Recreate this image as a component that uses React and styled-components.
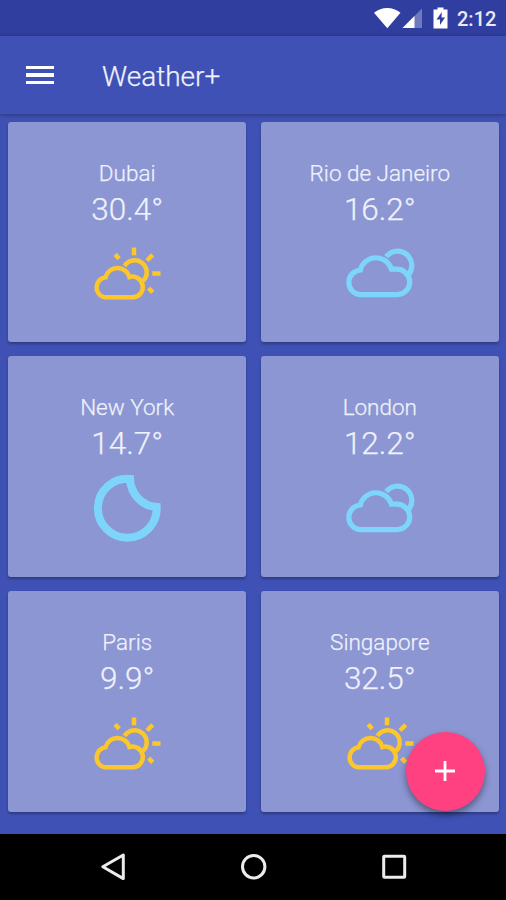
import React from "react";
import styled, { createGlobalStyle } from "styled-components";

const GlobalStyle = createGlobalStyle`
  * {
    box-sizing: border-box;
  }

  body {
    margin: 0;
    background-color: #3f51b5;
    font-family: Roboto, "Liberation Sans", sans-serif;
  }
`;

const Screen = styled.div`
  position: relative;
  display: flex;
  flex-direction: column;
  width: 506px;
  height: 900px;
  overflow: hidden;
  background-color: #3f51b5;
`;

const StatusBar = styled.div`
  display: flex;
  align-items: center;
  justify-content: flex-end;
  height: 36px;
  padding-right: 10px;
  background-color: #303f9f;
`;

const StatusIcons = styled.svg`
  display: block;
  width: 76px;
  height: 36px;
`;

const Clock = styled.div`
  width: 39px;
  margin-left: 7px;
  padding-top: 2px;
  color: #e8eafa;
  font-size: 20px;
  font-weight: 500;
  line-height: 36px;
  white-space: nowrap;
`;

const AppBar = styled.header`
  display: flex;
  align-items: center;
  height: 78px;
  padding: 0 26px;
  background-color: #3f51b5;
  box-shadow: 0 1px 5px rgba(0, 0, 0, 0.35);
`;

const MenuButton = styled.button`
  display: flex;
  flex-direction: column;
  gap: 4px;
  width: 28px;
  padding: 0;
  border: none;
  background: none;
`;

const MenuLine = styled.span`
  height: 3.6px;
  background-color: white;
`;

const Title = styled.h1`
  margin: 0 0 0 48px;
  padding-top: 3px;
  color: #f0f2fc;
  font-size: 28px;
  font-weight: 300;
  line-height: 40px;
  -webkit-text-stroke: 0.25px #f0f2fc;
`;

const Grid = styled.main`
  display: grid;
  flex: 1;
  grid-template-columns: 1fr 1fr;
  grid-auto-rows: 220.5px;
  gap: 14.3px;
  padding: 7.6px 7px 0 8px;
`;

const Card = styled.section`
  display: flex;
  flex-direction: column;
  align-items: center;
  padding-top: 37px;
  border-radius: 3px;
  background-color: #8c96d2;
  box-shadow: 0 2px 3px rgba(0, 0, 0, 0.28);
  color: #eff1fc;
  -webkit-text-stroke: 0.25px #eff1fc;
`;

const City = styled.div`
  font-size: 22.5px;
  font-weight: 300;
  line-height: 28px;
`;

const Temperature = styled.div`
  padding-top: 1px;
  font-size: 31.5px;
  font-weight: 300;
  line-height: 44px;
`;

const WeatherIcon = styled.svg`
  width: 100px;
  height: 76px;
  margin-top: 3.5px;
  fill: none;
  stroke: ${(props) => props.$color};
  stroke-width: ${(props) => props.$stroke};
`;

const AddButton = styled.button`
  position: absolute;
  right: 21.5px;
  bottom: 89.5px;
  display: flex;
  align-items: center;
  justify-content: center;
  width: 79px;
  height: 79px;
  padding: 0;
  border: none;
  border-radius: 50%;
  background-color: #ff4081;
  box-shadow: 0 4px 7px rgba(0, 0, 0, 0.4);
`;

const NavBar = styled.nav`
  height: 66px;
  background-color: black;
`;

const NavIcons = styled.svg`
  display: block;
  width: 506px;
  height: 66px;
  fill: none;
  stroke: #ececec;
  stroke-width: 3;
  stroke-linejoin: round;
`;

const PartlySunny = () => (
  <WeatherIcon viewBox="0 -5 100 76" $color="#fcc72c" $stroke={4.5}>
    <path d="M27.6 57.3A10.2 10.2 0 0 1 28.6 37.2A12.3 12.3 0 0 1 52.4 37A10.4 10.4 0 1 1 56.5 57.3Z" />
    <path d="M47.5 26A12 12 0 1 1 66 41" />
    <path d="M57 7.4V15.2M70 20.5L75.7 14.8M75.3 33.6H83.5M71.6 48.2L75.8 52.4M38.1 14.4L42.2 18.7" />
  </WeatherIcon>
);

const Cloudy = () => (
  <WeatherIcon viewBox="0 -5 100 76" $color="#7dd5fb" $stroke={5.2}>
    <path d="M30 54.7A12.4 12.4 0 0 1 30.3 30A16.2 16.2 0 0 1 61.5 29.2H66.7A12.7 12.7 0 0 1 67.2 54.7Z" />
    <path d="M56.2 16.7A13.7 13.7 0 1 1 78.8 34.2" />
  </WeatherIcon>
);

const ClearNight = () => (
  <WeatherIcon viewBox="0 -5 100 76" $color="#7dd5fb" $stroke={8}>
    <path d="M53 4C53.5 17.6 64 31.1 79.7 32.1A29.4 29.4 0 1 1 53 4Z" />
  </WeatherIcon>
);

const ICONS = {
  sunny: PartlySunny,
  cloudy: Cloudy,
  night: ClearNight,
};

const CITIES = [
  { name: "Dubai", temp: "30.4°", icon: "sunny" },
  { name: "Rio de Janeiro", temp: "16.2°", icon: "cloudy" },
  { name: "New York", temp: "14.7°", icon: "night" },
  { name: "London", temp: "12.2°", icon: "cloudy" },
  { name: "Paris", temp: "9.9°", icon: "sunny" },
  { name: "Singapore", temp: "32.5°", icon: "sunny" },
];

const App = () => {
  return (
    <>
      <GlobalStyle />
      <Screen>
        <StatusBar>
          <StatusIcons viewBox="0 0 76 36" fill="white">
            {/* wifi */}
            <path d="M0 12.8C7.5 6.3 19 6.3 26.5 12.8L13.3 28.3Z" />
            {/* signal */}
            <path d="M48 8.5V28H28.5Z" fill="#6f79bc" />
            <path d="M40.5 16V28H28.5Z" />
            {/* battery */}
            <path d="M63.5 7.5H69.5V9.5H73.5V28.5H59.5V9.5H63.5Z" />
            <path d="M67.8 12L62.5 19.5H66V25L71 17.6H67.5Z" fill="#303f9f" />
          </StatusIcons>
          <Clock>2:12</Clock>
        </StatusBar>
        <AppBar>
          <MenuButton aria-label="Menu">
            <MenuLine />
            <MenuLine />
            <MenuLine />
          </MenuButton>
          <Title>Weather+</Title>
        </AppBar>
        <Grid>
          {CITIES.map((city) => {
            const Icon = ICONS[city.icon];
            return (
              <Card key={city.name}>
                <City>{city.name}</City>
                <Temperature>{city.temp}</Temperature>
                <Icon />
              </Card>
            );
          })}
        </Grid>
        <NavBar>
          <NavIcons viewBox="0 0 506 66">
            <path d="M102.8 32.7L123.3 21V44.6Z" />
            <circle cx="253.7" cy="32.7" r="11.2" />
            <rect x="383.7" y="22.2" width="21" height="21" rx="0.8" />
          </NavIcons>
        </NavBar>
        <AddButton aria-label="Add city">
          <svg width="22" height="22" stroke="white" strokeWidth="2.8">
            <path d="M11 1V21M1 11H21" />
          </svg>
        </AddButton>
      </Screen>
    </>
  );
};

export default App;
